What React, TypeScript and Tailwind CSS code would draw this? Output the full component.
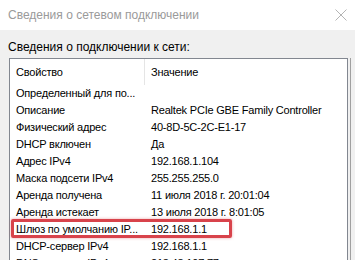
const rows: [string, string][] = [
  ['Определенный для по...', ''],
  ['Описание', 'Realtek PCIe GBE Family Controller'],
  ['Физический адрес', '40-8D-5C-2C-E1-17'],
  ['DHCP включен', 'Да'],
  ['Адрес IPv4', '192.168.1.104'],
  ['Маска подсети IPv4', '255.255.255.0'],
  ['Аренда получена', '11 июля 2018 г. 20:01:04'],
  ['Аренда истекает', '13 июля 2018 г. 8:01:05'],
  ['Шлюз по умолчанию IP...', '192.168.1.1'],
  ['DHCP-сервер IPv4', '192.168.1.1'],
  ['DNS-серверы IPv4', '213.48.197.77'],
]

export default function App() {
  return (
    <div className="relative w-[355px] h-[260px] overflow-hidden bg-[#f0f0f0] font-['Liberation_Sans',Arial,sans-serif] text-[11px] tracking-[-0.2px] text-black">
      <div className="h-[30px] bg-white flex items-center justify-between pl-2 pr-[7px]">
        <span className="text-[12px] tracking-normal text-[#9a9a9a]">Сведения о сетевом подключении</span>
        <svg width="12" height="12" viewBox="0 0 12 12" className="mr-[1px]">
          <path d="M0.5 0.5 L11.5 11.5 M11.5 0.5 L0.5 11.5" stroke="#b4b4b4" strokeWidth="1" fill="none" />
        </svg>
      </div>

      <div className="pl-2 pt-[9px] leading-4 text-[12px] tracking-normal">Сведения о подключении к сети:</div>

      <div className="flex mt-[3px] ml-[9px]">
        <div className="w-[339px] border border-[#828790] bg-white">
          <div className="flex h-[26px] items-center">
            <div className="w-[134px] pl-[6px]">Свойство</div>
            <div className="w-px self-stretch bg-[#e5e5e5]" />
            <div className="pl-[6px]">Значение</div>
          </div>
          {rows.map(([k, v]) => (
            <div key={k} className="flex h-[17px] items-center">
              <div className="w-[134px] pl-[6px] whitespace-nowrap">{k}</div>
              <div className="w-px" />
              <div className="pl-[6px] whitespace-nowrap">{v}</div>
            </div>
          ))}
        </div>
        <div className="ml-[2px] w-px bg-[#a0a0a0]" />
      </div>

      <div className="absolute left-[11px] top-[219px] w-[221px] h-[19px] border-[3px] border-[#d8434b] rounded-[2px] shadow-[0_0_3px_rgba(216,67,75,0.5)]" />
    </div>
  )
}
